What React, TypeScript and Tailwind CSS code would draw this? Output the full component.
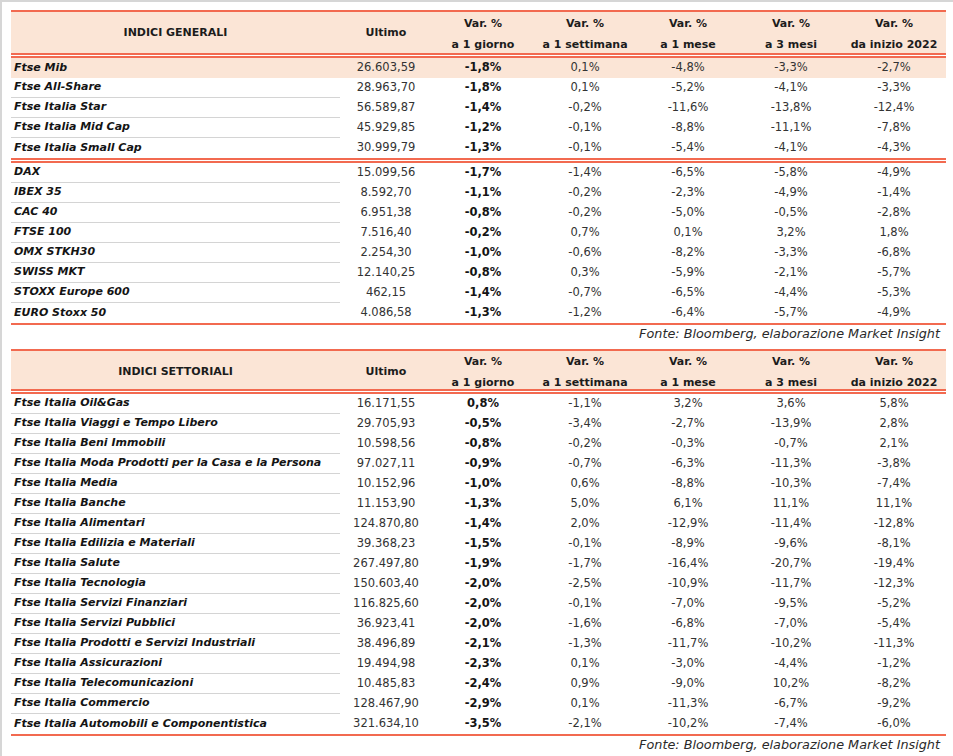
import React from "react";

type Row = {
  name: string;
  last: string;
  d1: string;
  w1: string;
  m1: string;
  m3: string;
  ytd: string;
  highlight?: boolean;
};

const COLS =
  "grid grid-cols-[329px_92px_102px_102px_104px_102px_104px]";

const GENERALI_A: Row[] = [
  { name: "Ftse Mib", last: "26.603,59", d1: "-1,8%", w1: "0,1%", m1: "-4,8%", m3: "-3,3%", ytd: "-2,7%", highlight: true },
  { name: "Ftse All-Share", last: "28.963,70", d1: "-1,8%", w1: "0,1%", m1: "-5,2%", m3: "-4,1%", ytd: "-3,3%" },
  { name: "Ftse Italia Star", last: "56.589,87", d1: "-1,4%", w1: "-0,2%", m1: "-11,6%", m3: "-13,8%", ytd: "-12,4%" },
  { name: "Ftse Italia Mid Cap", last: "45.929,85", d1: "-1,2%", w1: "-0,1%", m1: "-8,8%", m3: "-11,1%", ytd: "-7,8%" },
  { name: "Ftse Italia Small Cap", last: "30.999,79", d1: "-1,3%", w1: "-0,1%", m1: "-5,4%", m3: "-4,1%", ytd: "-4,3%" },
];

const GENERALI_B: Row[] = [
  { name: "DAX", last: "15.099,56", d1: "-1,7%", w1: "-1,4%", m1: "-6,5%", m3: "-5,8%", ytd: "-4,9%" },
  { name: "IBEX 35", last: "8.592,70", d1: "-1,1%", w1: "-0,2%", m1: "-2,3%", m3: "-4,9%", ytd: "-1,4%" },
  { name: "CAC 40", last: "6.951,38", d1: "-0,8%", w1: "-0,2%", m1: "-5,0%", m3: "-0,5%", ytd: "-2,8%" },
  { name: "FTSE 100", last: "7.516,40", d1: "-0,2%", w1: "0,7%", m1: "0,1%", m3: "3,2%", ytd: "1,8%" },
  { name: "OMX STKH30", last: "2.254,30", d1: "-1,0%", w1: "-0,6%", m1: "-8,2%", m3: "-3,3%", ytd: "-6,8%" },
  { name: "SWISS MKT", last: "12.140,25", d1: "-0,8%", w1: "0,3%", m1: "-5,9%", m3: "-2,1%", ytd: "-5,7%" },
  { name: "STOXX Europe 600", last: "462,15", d1: "-1,4%", w1: "-0,7%", m1: "-6,5%", m3: "-4,4%", ytd: "-5,3%" },
  { name: "EURO Stoxx 50", last: "4.086,58", d1: "-1,3%", w1: "-1,2%", m1: "-6,4%", m3: "-5,7%", ytd: "-4,9%" },
];

const SETTORIALI: Row[] = [
  { name: "Ftse Italia Oil&Gas", last: "16.171,55", d1: "0,8%", w1: "-1,1%", m1: "3,2%", m3: "3,6%", ytd: "5,8%" },
  { name: "Ftse Italia Viaggi e Tempo Libero", last: "29.705,93", d1: "-0,5%", w1: "-3,4%", m1: "-2,7%", m3: "-13,9%", ytd: "2,8%" },
  { name: "Ftse Italia Beni Immobili", last: "10.598,56", d1: "-0,8%", w1: "-0,2%", m1: "-0,3%", m3: "-0,7%", ytd: "2,1%" },
  { name: "Ftse Italia Moda Prodotti per la Casa e la Persona", last: "97.027,11", d1: "-0,9%", w1: "-0,7%", m1: "-6,3%", m3: "-11,3%", ytd: "-3,8%" },
  { name: "Ftse Italia Media", last: "10.152,96", d1: "-1,0%", w1: "0,6%", m1: "-8,8%", m3: "-10,3%", ytd: "-7,4%" },
  { name: "Ftse Italia Banche", last: "11.153,90", d1: "-1,3%", w1: "5,0%", m1: "6,1%", m3: "11,1%", ytd: "11,1%" },
  { name: "Ftse Italia Alimentari", last: "124.870,80", d1: "-1,4%", w1: "2,0%", m1: "-12,9%", m3: "-11,4%", ytd: "-12,8%" },
  { name: "Ftse Italia Edilizia e Materiali", last: "39.368,23", d1: "-1,5%", w1: "-0,1%", m1: "-8,9%", m3: "-9,6%", ytd: "-8,1%" },
  { name: "Ftse Italia Salute", last: "267.497,80", d1: "-1,9%", w1: "-1,7%", m1: "-16,4%", m3: "-20,7%", ytd: "-19,4%" },
  { name: "Ftse Italia Tecnologia", last: "150.603,40", d1: "-2,0%", w1: "-2,5%", m1: "-10,9%", m3: "-11,7%", ytd: "-12,3%" },
  { name: "Ftse Italia Servizi Finanziari", last: "116.825,60", d1: "-2,0%", w1: "-0,1%", m1: "-7,0%", m3: "-9,5%", ytd: "-5,2%" },
  { name: "Ftse Italia Servizi Pubblici", last: "36.923,41", d1: "-2,0%", w1: "-1,6%", m1: "-6,8%", m3: "-7,0%", ytd: "-5,4%" },
  { name: "Ftse Italia Prodotti e Servizi Industriali", last: "38.496,89", d1: "-2,1%", w1: "-1,3%", m1: "-11,7%", m3: "-10,2%", ytd: "-11,3%" },
  { name: "Ftse Italia Assicurazioni", last: "19.494,98", d1: "-2,3%", w1: "0,1%", m1: "-3,0%", m3: "-4,4%", ytd: "-1,2%" },
  { name: "Ftse Italia Telecomunicazioni", last: "10.485,83", d1: "-2,4%", w1: "0,9%", m1: "-9,0%", m3: "10,2%", ytd: "-8,2%" },
  { name: "Ftse Italia Commercio", last: "128.467,90", d1: "-2,9%", w1: "0,1%", m1: "-11,3%", m3: "-6,7%", ytd: "-9,2%" },
  { name: "Ftse Italia Automobili e Componentistica", last: "321.634,10", d1: "-3,5%", w1: "-2,1%", m1: "-10,2%", m3: "-7,4%", ytd: "-6,0%" },
];

const PERIODS = ["a 1 giorno", "a 1 settimana", "a 1 mese", "a 3 mesi", "da inizio 2022"];

function DoubleLine() {
  return (
    <div>
      <div className="h-[2px] bg-[#f26a50]" />
      <div className="h-px" />
      <div className="h-[2px] bg-[#f26a50]" />
    </div>
  );
}

// first header sits a little taller in the sheet, with the two-line labels pushed down
function Header({ title, first }: { title: string; first?: boolean }) {
  return (
    <div
      className={`${COLS} border-t-2 border-[#f26a50] bg-[#fbe5d6] text-[11px] font-bold text-[#1c1c1c] ${
        first ? "h-[43px]" : "h-[40px]"
      }`}
    >
      <div className="flex items-center justify-center">{title}</div>
      <div className="flex items-center justify-center">Ultimo</div>
      {PERIODS.map((p) => (
        <div
          key={p}
          className={`flex flex-col items-center justify-center leading-[21px] ${first ? "pt-[1px]" : "pb-px"}`}
        >
          <span>Var. %</span>
          <span>{p}</span>
        </div>
      ))}
    </div>
  );
}

function DataRow({ row, divider }: { row: Row; divider: boolean }) {
  return (
    <div className={`${COLS} h-5 text-[11.5px] ${row.highlight ? "bg-[#fbe5d6]" : ""}`}>
      <div
        className={`flex items-center pl-[3px] text-[11px] font-bold italic text-[#141414] ${
          divider ? "border-b border-[#d4d4d4]" : ""
        }`}
      >
        {row.name}
      </div>
      <div className="flex items-center justify-center text-[#333]">{row.last}</div>
      <div className="flex items-center justify-center font-bold text-[#141414]">{row.d1}</div>
      <div className="flex items-center justify-center text-[#333]">{row.w1}</div>
      <div className="flex items-center justify-center text-[#333]">{row.m1}</div>
      <div className="flex items-center justify-center text-[#333]">{row.m3}</div>
      <div className="flex items-center justify-center text-[#333]">{row.ytd}</div>
    </div>
  );
}

function Group({ rows }: { rows: Row[] }) {
  return (
    <div>
      {rows.map((r, i) => (
        <DataRow key={r.name} row={r} divider={i < rows.length - 1 && !r.highlight} />
      ))}
    </div>
  );
}

function Source() {
  return (
    <div className="h-[18px] pr-[6px] text-right text-[12.8px] italic leading-[18px] text-[#2a2a2a]">
      Fonte: Bloomberg, elaborazione Market Insight
    </div>
  );
}

export default function App() {
  return (
    <div className="min-h-[756px] w-[953px] border-l-2 border-t-2 border-[#d6d6d6] bg-white pl-[9px] pt-[8px] font-['DejaVu_Sans',sans-serif] text-[12px]">
      <div className="w-[935px]">
        <Header title="INDICI GENERALI" first />
        <DoubleLine />
        <Group rows={GENERALI_A} />
        <DoubleLine />
        <Group rows={GENERALI_B} />
        <div className="h-[2px] bg-[#f26a50]" />
        <Source />

        <div className="h-[6px]" />

        <Header title="INDICI SETTORIALI" />
        <DoubleLine />
        <Group rows={SETTORIALI} />
        <div className="h-[2px] bg-[#f26a50]" />
        <Source />
      </div>
    </div>
  );
}
